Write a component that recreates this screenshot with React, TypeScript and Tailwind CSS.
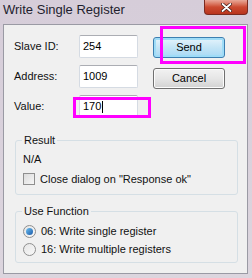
import React from 'react';

const font = { fontFamily: '"Liberation Sans", Arial, sans-serif' };

const TextBox = ({ value, caret }: { value: string; caret?: boolean }) => (
  <div className="w-[59px] h-[23px] bg-white border border-[#d5dbe3] border-t-[#abadb3] rounded-[2px] flex items-center pl-[3px] text-[11px] text-black">
    {value}
    {caret && <span className="w-px h-[12px] bg-black ml-px" />}
  </div>
);

const GroupBox = ({ title, children }: { title: string; children: React.ReactNode }) => (
  <div className="relative ml-[11px] mr-[9px] border border-[#d5dfe5] rounded-[3px] px-[7px] pt-[9px]">
    <span className="absolute -top-[8px] left-[6px] bg-[#f0f0f0] px-[2px] text-[11px] leading-[14px] text-[#111]">
      {title}
    </span>
    {children}
  </div>
);

const Radio = ({ checked, label }: { checked?: boolean; label: string }) => (
  <div className="flex items-center h-[18px] text-[11px] text-[#111]">
    <span className="w-[13px] h-[13px] rounded-full border border-[#8f8f8f] bg-gradient-to-br from-[#e6e6e6] to-[#f8f8f8] flex items-center justify-center mr-[5px]">
      {checked && (
        <span className="w-[7px] h-[7px] rounded-full bg-gradient-to-br from-[#6fc0f0] to-[#1b5aa8]" />
      )}
    </span>
    {label}
  </div>
);

export default function App() {
  return (
    <div className="w-[252px] h-[278px] bg-gradient-to-b from-[#d6cdd9] to-[#dcd5de] flex flex-col overflow-hidden select-none" style={font}>
      <div className="h-[24px] flex items-start justify-between">
        <span className="pl-[3px] pt-[3px] text-[13px] leading-[14px] text-[#1e1e2e]">Write Single Register</span>
        <div className="mr-[4px] w-[44px] h-[15px] rounded-b-[4px] border border-[#7a2a20] border-t-0 bg-gradient-to-b from-[#e8a898] via-[#cc4a30] to-[#b8341d] flex items-center justify-center">
          <svg width="11" height="9" viewBox="0 0 11 9">
            <path d="M1.5 1 L9.5 8 M9.5 1 L1.5 8" stroke="#3a1410" strokeWidth="3.2" strokeLinecap="round" />
            <path d="M1.5 1 L9.5 8 M9.5 1 L1.5 8" stroke="#ffffff" strokeWidth="1.8" strokeLinecap="round" />
          </svg>
        </div>
      </div>

      <div className="relative ml-[3px] mr-[4px] h-[250px] bg-[#f0f0f0] border border-[#9a9aa4] text-[11px] text-[#111]">
        <div className="flex pt-[10px]">
          <div className="flex flex-col gap-[7px]">
            <div className="flex items-center h-[23px]">
              <span className="w-[75px] pl-[10px]">Slave ID:</span>
              <TextBox value="254" />
            </div>
            <div className="flex items-center h-[23px]">
              <span className="w-[75px] pl-[10px]">Address:</span>
              <TextBox value="1009" />
            </div>
            <div className="flex items-center h-[23px]">
              <span className="w-[75px] pl-[10px]">Value:</span>
              <TextBox value="170" caret />
            </div>
          </div>
          <div className="flex flex-col gap-[10px] ml-[15px] pt-[2px]">
            <button className="w-[72px] h-[21px] rounded-[3px] border border-[#3c7fb1] bg-gradient-to-b from-[#e5f4fc] via-[#c4e5f6] to-[#a7d9f5] text-[11px] text-black shadow-[inset_0_0_0_2px_#9fdcf7]">
              Send
            </button>
            <button className="w-[72px] h-[21px] rounded-[3px] border border-[#707070] bg-gradient-to-b from-[#f2f2f2] via-[#e6e6e6] to-[#d2d2d2] text-[11px] text-black shadow-[inset_0_0_0_1px_#fcfcfc]">
              Cancel
            </button>
          </div>
        </div>

        <div className="mt-[22px]">
          <GroupBox title="Result">
            <div className="h-[18px] flex items-center text-[11px]">N/A</div>
            <div className="flex items-center h-[26px] pb-[4px] text-[11px]">
              <span className="w-[12px] h-[12px] border border-[#8f8f8f] bg-gradient-to-br from-[#dcdcdc] to-[#f6f6f6] mr-[5px]" />
              Close dialog on "Response ok"
            </div>
          </GroupBox>
        </div>

        <div className="mt-[16px]">
          <GroupBox title="Use Function">
            <div className="pt-[1px] pb-[4px]">
              <Radio checked label="06: Write single register" />
              <Radio label="16: Write multiple registers" />
            </div>
          </GroupBox>
        </div>

        <div className="absolute left-[156px] top-[1px] w-[86px] h-[38px] border-[3px] border-[#ff00ff]" />
        <div className="absolute left-[69px] top-[72px] w-[78px] h-[21px] border-[3px] border-[#ff00ff]" />
      </div>
    </div>
  );
}
